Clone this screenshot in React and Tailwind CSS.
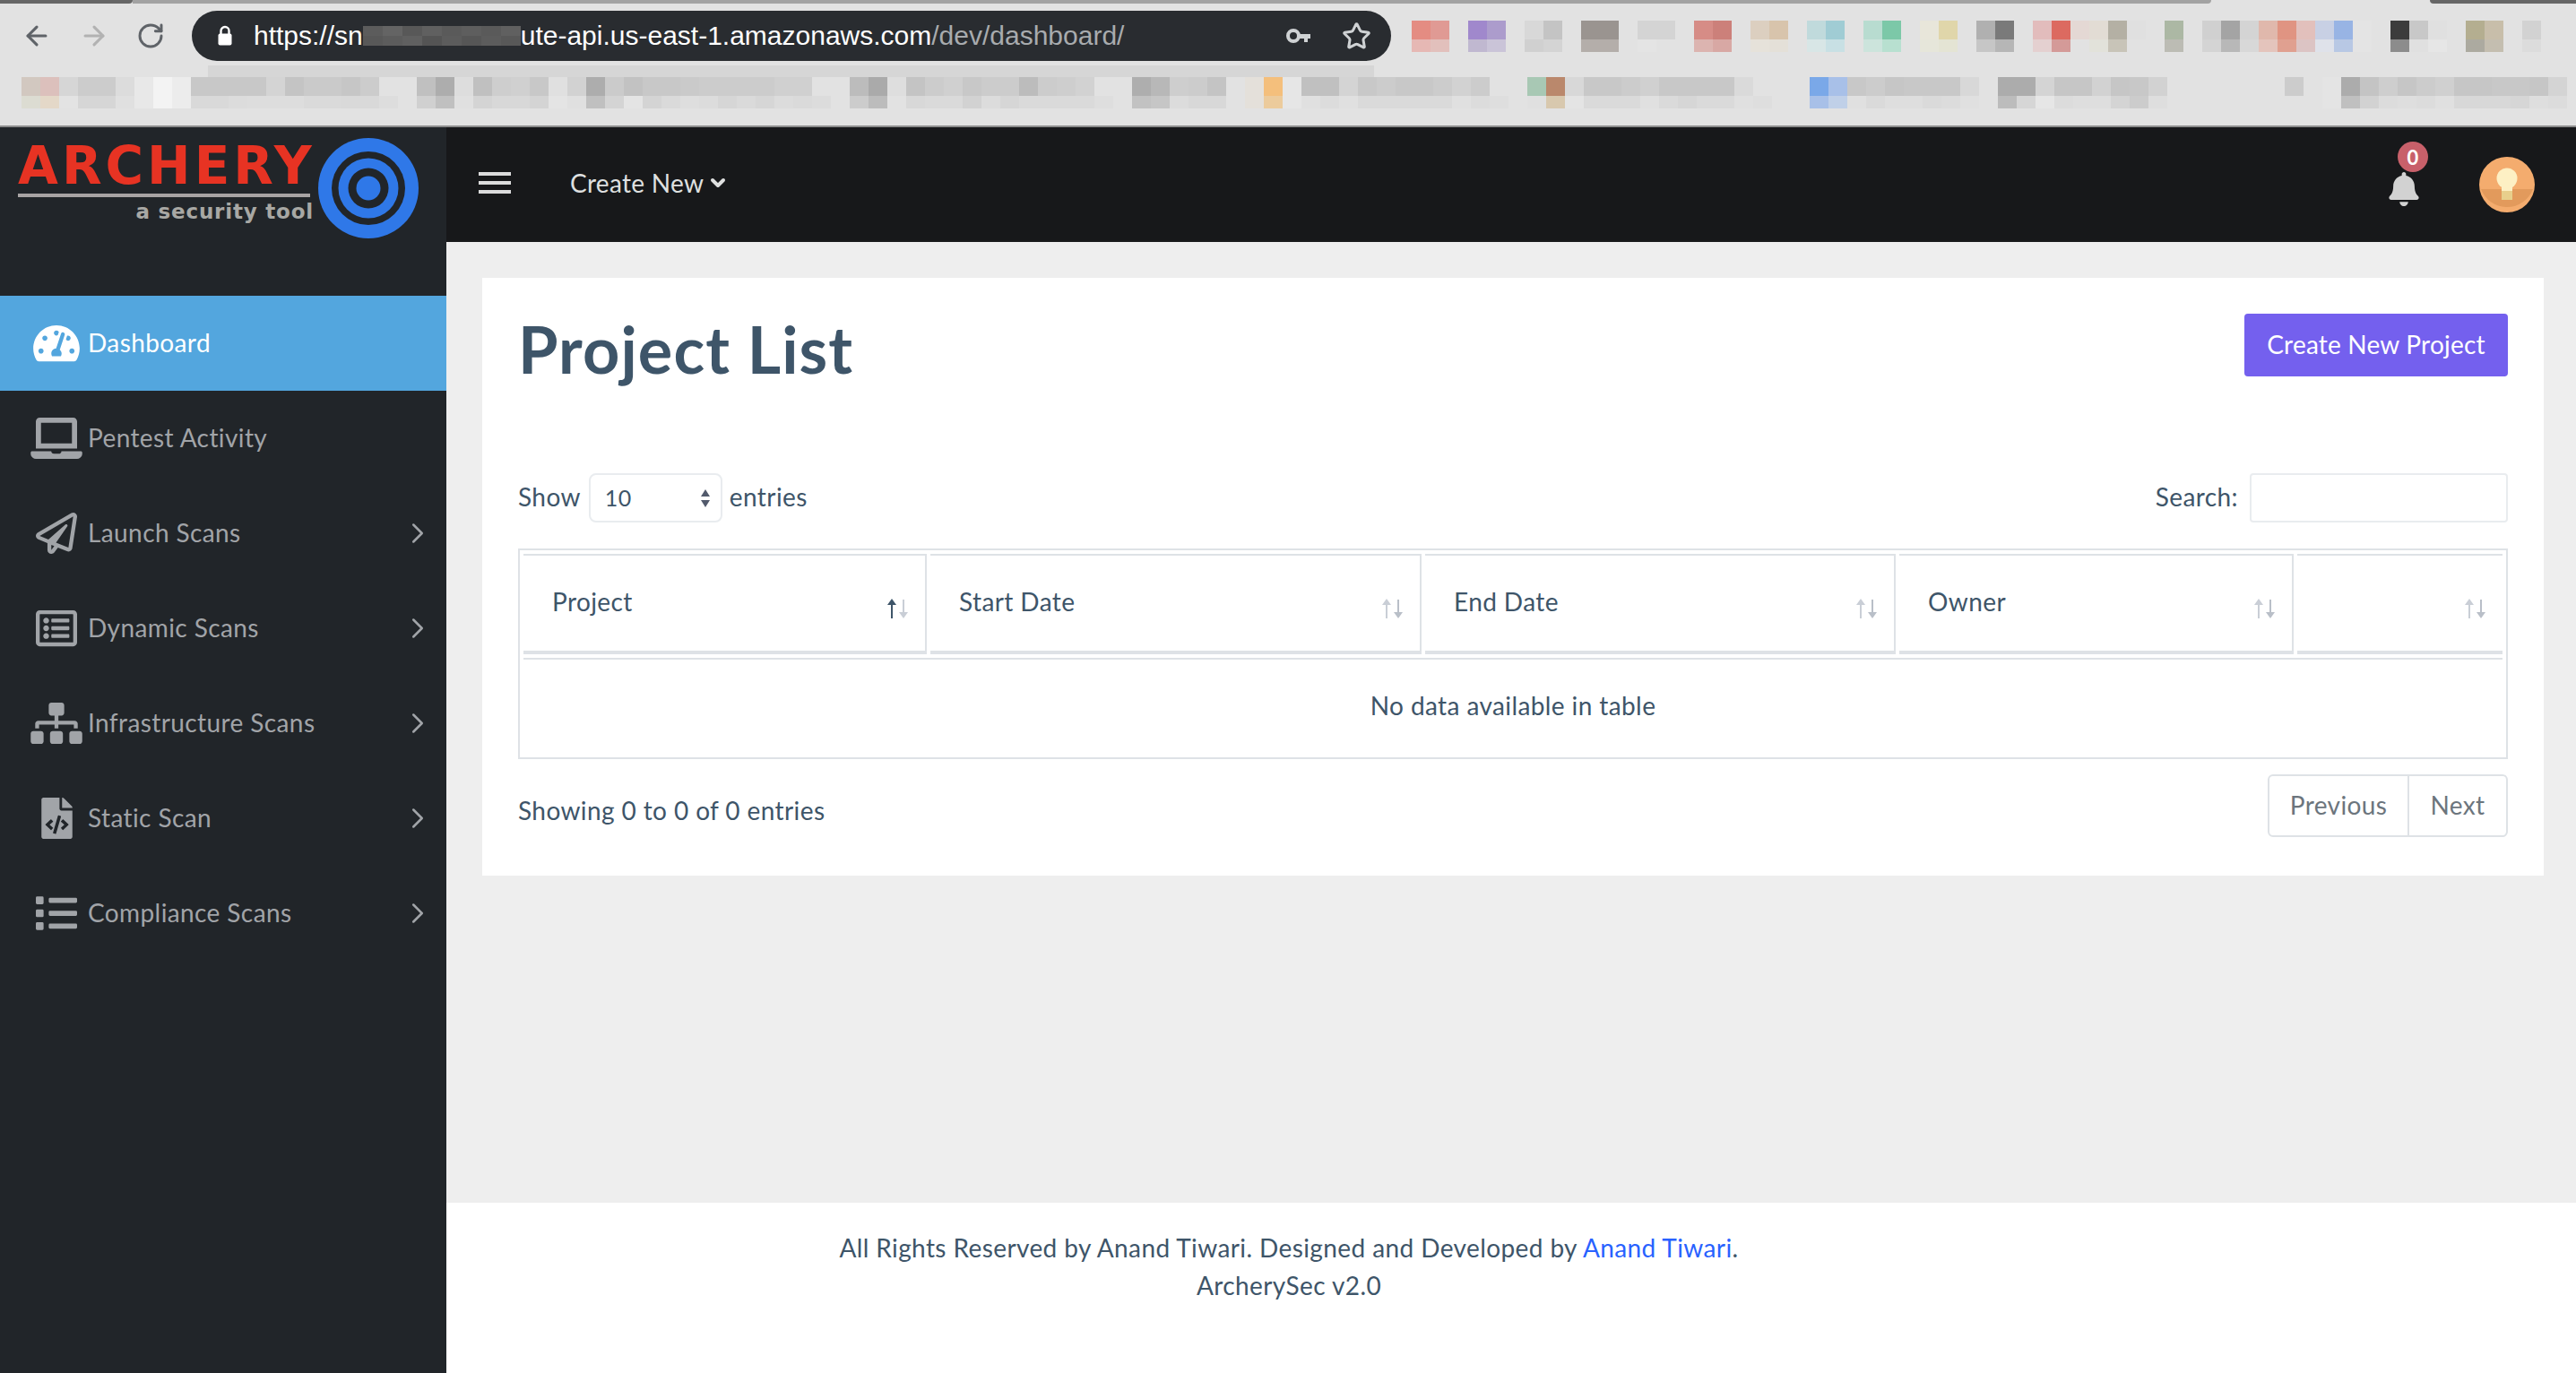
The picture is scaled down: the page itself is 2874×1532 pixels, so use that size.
import { ArrowLeft, ArrowRight, RotateCw, Star, ChevronRight, ChevronDown } from "lucide-react"
import {
  FaTachometerAlt,
  FaLaptop,
  FaRegPaperPlane,
  FaRegListAlt,
  FaSitemap,
  FaFileCode,
  FaList,
  FaBell,
} from "react-icons/fa"

// redacted bookmark bar, "top/bottom" per 21px block. two hex digits = a gray
const row1 = "e48c82/e6b8b4 e09a94/e2c0bc e2/e2 a088cc/c0b8d0 ac9ccc/cac4d8 e2/e2 d8/d0 c4/d4 e2/e2 9a9490/b4aeaa 9a9490/b4aeaa e2/e2 d4/e4 d4/e2 e2/e2 d68c86/dcb4b0 cc807a/d8a8a4 e2/e2 dccfc0/e6e2da d8c4ac/e4e0d8 e2/e2 c0dadc/d8e6e6 a0ccd4/c8e0e4 e2/e2 b8dcd0/cce4dc 7cc8a8/b8e0d0 e2/e2 e8e6da/e6e6da e0d6aa/e4e4d4 e2/e2 b0/c6 7a/b6 e2/e2 e2bcbc/e4d0d0 dc6a60/d49a98 e4d8d4/e2e2e2 e2dcd4/e2e2da b4b0a4/c8c4b8 e0/e2 e2/e2 acb8a4/bcbcb4 e2/e2 d0/d4 a4/b8 d4/d8 e0b8ac/e4c4bc e09482/e0a090 e2c0bc/dcc4c4 c8d0e4/dfe2ea 98b4e4/b8c8e4 e4/e4 e2/e2 3c/8c c8/e0 e0/e6 e2/e2 b4ae90/acaaa0 c8beaa/c4beb0 e2/e2 d2/dc".split(" ")

const row2 = "d2c8c0/dcdcd2 dcc0bc/e4d8c8 d6/e3 cc/d6 cc/d6 dc/e0 e8/e8 f3/f3 ec/ec c8/d9 c8/d9 c8/dc c8/dd d4/dd c4/dd ca/da ca/da c6/d9 cc/d9 e2/dd e2/e2 c0/d0 ad/c0 dd/e0 c0/d4 ce/d8 d0/d8 c8/d4 e0/e4 d2/e0 ad/c0 cb/d4 c2/e4 c8/d4 c8/da ca/de cc/dc cc/d6 cc/da cc/d6 d0/dc d0/da e2/dc e2/e2 bc/cc aa/bc de/e2 c4/d8 cc/da d0/da c8/d2 cc/dc cc/d6 bc/da cc/da ce/da d2/da e2/de e2/e2 ae/c2 b8/c6 ce/dc cc/d8 c4/d8 e2/e2 e4e0da/e4e0da f4bf7c/eccb9c e6/e6 c0/e0 c0/dc d4/e0 c8/da cc/da c8/da c8/da cc/da d2/e0 cc/dc e2/de e2/e2 a8c8b4/e0e0e0 ba886c/d8c8ae d8/e4 c8/da c8/da cc/da d0/e0 c8/da c8/d6 c8/da c8/da da/e0 e2/de e2/e2 e2/e2 7aa8e8/a8c0e8 a8c0e8/c0d0e8 c8/e0 cc/da c6/de c8/de c8/da c8/dc d8/e0 e2/e2 ac/bc ac/d6 d4/e6 c6/dc c6/de d2/de c6/d4 c8/cc d2/de e2/e2 e2/e2 e2/e2 e2/e2 e2/e2 e2/e2".split(" ")

const row2b = "cc/e2 e2/e2 e4/e4 ac/c0 c4/d2 ce/dc c6/de cc/dc d0/e0 c6/d8 c6/d8 c8/d8 c8/d6 c6/de d4/dc".split(" ")

const urlBlur = "5c/58 64/5c 58/60 60/54 5a/5c 5e/56 5a/5c 60/58".split(" ")

function shade(c) {
  return c.length === 2 ? `#${c}${c}${c}` : `#${c}`
}

function Blocks({ cells, w = "w-[21px]", topH = "h-[21px]", botH = "h-[14px]" }) {
  return (
    <div className="flex">
      {cells.map((cell, i) => {
        const [top, bot] = cell.split("/")
        return (
          <div key={i} className={`${w} shrink-0`}>
            <div className={topH} style={{ background: shade(top) }} />
            <div className={botH} style={{ background: shade(bot) }} />
          </div>
        )
      })}
    </div>
  )
}

function BrowserChrome() {
  return (
    <div className="h-[142px] shrink-0 bg-[#e2e2e2] border-b-2 border-[#8c8c8c] font-['Liberation_Sans',sans-serif] tracking-normal">
      <div className="flex h-[4px]">
        <div className="w-[148px] bg-[#666666] rounded-br-md" />
        <div className="w-[2319px] bg-[#a2a2a2] rounded-br-md" />
        <div className="w-[244px]" />
        <div className="flex-1 bg-[#666666] rounded-bl-md" />
      </div>

      <div className="flex mt-[8px] h-[56px]">
        <div className="w-[214px] shrink-0 flex items-center pl-[24px] gap-[30px] text-[#5f6368]">
          <ArrowLeft size={34} strokeWidth={2.2} className="shrink-0" />
          <ArrowRight size={34} strokeWidth={2.2} className="shrink-0 text-[#b2b2b2]" />
          <RotateCw size={32} strokeWidth={2.2} className="shrink-0" />
        </div>

        <div className="w-[1338px] shrink-0 rounded-full bg-[#292c30] flex items-center pl-[28px] pr-[22px]">
          <svg className="shrink-0" width="18" height="24" viewBox="0 0 18 24">
            <path d="M4.5 10V6.5a4.5 4.5 0 0 1 9 0V10" fill="none" stroke="#fff" strokeWidth="2.4" />
            <rect x="1.5" y="9.5" width="15" height="13" rx="2" fill="#fff" />
          </svg>
          <div className="pl-[23px] flex items-center text-[30px] leading-none text-white whitespace-nowrap">
            <span>https://sn</span>
            <Blocks cells={urlBlur} w="w-[22px]" topH="h-[11px]" botH="h-[11px]" />
            <span>ute-api.us-east-1.amazonaws.com</span>
            <span className="text-[#a8abae]">/dev/dashboard/</span>
          </div>
          <div className="ml-auto flex items-center gap-[34px] text-[#cfd2d4]">
            <svg width="28" height="18" viewBox="0 0 28 18">
              <circle cx="8" cy="9" r="6" fill="none" stroke="currentColor" strokeWidth="4" />
              <path d="M14 7h13v5h-3v4h-4v-4h-6z" fill="currentColor" />
            </svg>
            <Star size={33} strokeWidth={2.2} />
          </div>
        </div>

        <div className="ml-[23px] mt-[11px]">
          <Blocks cells={row1} />
        </div>
      </div>

      <div className="ml-[232px] mt-[5px] w-[1301px] h-[13px] bg-[#d6d6d6]" />
      <div className="flex pl-[24px]">
        <Blocks cells={row2} />
        <div className="w-[5px]" />
        <Blocks cells={row2b} />
      </div>
    </div>
  )
}

const menu = [
  { label: "Dashboard", icon: FaTachometerAlt, iconClass: "w-[52px] h-[46px]", active: true },
  { label: "Pentest Activity", icon: FaLaptop, iconClass: "w-[58px] h-[46px]" },
  { label: "Launch Scans", icon: FaRegPaperPlane, iconClass: "w-[46px] h-[46px]", arrow: true },
  { label: "Dynamic Scans", icon: FaRegListAlt, iconClass: "w-[46px] h-[46px]", arrow: true },
  { label: "Infrastructure Scans", icon: FaSitemap, iconClass: "w-[58px] h-[46px]", arrow: true },
  { label: "Static Scan", icon: FaFileCode, iconClass: "w-[35px] h-[46px]", arrow: true },
  { label: "Compliance Scans", icon: FaList, iconClass: "w-[46px] h-[46px]", arrow: true },
]

function Logo() {
  return (
    <div className="h-[188px] flex items-start pt-[12px] pl-[20px] tracking-normal">
      <div className="w-[335px] pt-[6px] font-['DejaVu_Sans',sans-serif]">
        <div className="text-[58px] leading-[50px] font-bold text-[#e73323] tracking-[4px] whitespace-nowrap">ARCHERY</div>
        <div className="h-[4px] w-[326px] mt-[6px] bg-[#a8a4a4]" />
        <div className="text-[23px] leading-[30px] mt-[1px] w-[330px] text-right font-bold text-[#a8a8a4] tracking-[0.8px] whitespace-nowrap">
          a security tool
        </div>
      </div>
      <svg width="112" height="112" viewBox="0 0 112 112" className="shrink-0">
        <circle cx="56" cy="56" r="56" fill="#2f78e8" />
        <circle cx="56" cy="56" r="41" fill="#212529" />
        <circle cx="56" cy="56" r="33.5" fill="#2f78e8" />
        <circle cx="56" cy="56" r="22.5" fill="#212529" />
        <circle cx="56" cy="56" r="13.5" fill="#2f78e8" />
      </svg>
    </div>
  )
}

function Sidebar() {
  return (
    <aside className="w-[498px] shrink-0 bg-[#212529]">
      <Logo />
      {menu.map((item) => {
        const Icon = item.icon
        return (
          <div
            key={item.label}
            className={`h-[106px] flex items-center ${item.active ? "bg-[#53a6de] text-white" : "text-[#a1a4a8]"}`}
          >
            <div className="w-[98px] pl-[34px] pr-[6px] flex justify-center shrink-0">
              <Icon className={`${item.iconClass} shrink-0`} />
            </div>
            <span className="pb-[3px]">{item.label}</span>
            {item.arrow && <ChevronRight size={38} strokeWidth={1.6} className="ml-auto mr-[13px]" />}
          </div>
        )
      })}
    </aside>
  )
}

function TopBar() {
  return (
    <div className="h-[128px] shrink-0 bg-[#17181a] flex items-center pl-[36px] pr-[46px]">
      <div className="w-[36px] flex flex-col gap-[6px] mr-[66px] -mt-[4px]">
        <div className="h-[4px] bg-[#dcdcdc]" />
        <div className="h-[4px] bg-[#dcdcdc]" />
        <div className="h-[4px] bg-[#dcdcdc]" />
      </div>
      <div className="flex items-center text-[#dfe0e0] tracking-[0.3px] -mt-[4px]">
        Create New
        <ChevronDown size={24} strokeWidth={4} className="ml-[4px]" />
      </div>
      <div className="ml-auto flex items-center gap-[65px]">
        <div className="relative mt-[10px]">
          <FaBell size={38} className="text-[#d2d2d2]" />
          <div className="absolute -top-[34px] left-[12px] w-[34px] h-[34px] rounded-full bg-[#c8606a] text-white text-[22px] font-bold flex items-center justify-center">
            0
          </div>
        </div>
        <div className="w-[62px] h-[62px]">
          <svg width="62" height="62" viewBox="0 0 62 62">
            <circle cx="31" cy="31" r="31" fill="#f4ac6e" />
            <path d="M2 36h58a31 31 0 0 1-58 0z" fill="#e29a5c" />
            <rect x="25" y="36" width="12" height="12" fill="#e8cf8c" />
            <circle cx="31" cy="24" r="11.5" fill="#fdf0c4" />
            <rect x="25" y="24" width="12" height="14" fill="#fdf0c4" />
          </svg>
        </div>
      </div>
    </div>
  )
}

function SortIcon({ active }) {
  return (
    <svg width="28" height="26" viewBox="0 0 28 26" className="shrink-0 mt-[12px]">
      <g fill={active ? "#3e5569" : "#c9ced6"} stroke={active ? "#3e5569" : "#c9ced6"}>
        <path d="M8 6v18" strokeWidth="2" />
        <path d="M3 9l5-7 5 7z" strokeWidth="0" />
      </g>
      <g fill={active ? "#c9ced6" : "#b9bfc8"} stroke={active ? "#c9ced6" : "#b9bfc8"}>
        <path d="M21 3v17" strokeWidth="2" />
        <path d="M16 17h10l-5 7z" strokeWidth="0" />
      </g>
    </svg>
  )
}

const columns = [
  { label: "Project", active: true },
  { label: "Start Date" },
  { label: "End Date" },
  { label: "Owner" },
  { label: "" },
]

function ProjectTable() {
  return (
    <table className="w-full table-fixed border-separate border-spacing-[4px] border-2 border-[#dee2e6] mt-[29px]">
      <colgroup>
        <col className="w-[450px]" />
        <col className="w-[548px]" />
        <col className="w-[525px]" />
        <col className="w-[440px]" />
        <col className="w-[229px]" />
      </colgroup>
      <thead>
        <tr>
          {columns.map((col, i) => (
            <th
              key={i}
              className={`h-[112px] p-0 pl-[32px] pr-[17px] font-normal text-left border-t-2 border-b-4 border-[#dee2e6] ${
                i < 4 ? "border-r-2" : ""
              }`}
            >
              <div className="flex justify-between items-center">
                <span className="pb-[4px]">{col.label}</span>
                <SortIcon active={col.active} />
              </div>
            </th>
          ))}
        </tr>
      </thead>
      <tbody>
        <tr>
          <td colSpan={5} className="h-[107px] p-0 pb-[3px] text-center border-t-2 border-[#dee2e6]">
            No data available in table
          </td>
        </tr>
      </tbody>
    </table>
  )
}

function ProjectCard() {
  return (
    <section className="bg-white h-[667px] px-[40px] pt-[40px] text-[#3e5569]">
      <div className="flex items-start justify-between h-[178px]">
        <h1 className="text-[72px] leading-[78px] font-bold tracking-[1.1px]">Project List</h1>
        <button className="w-[294px] h-[70px] pb-[3px] rounded-[4px] bg-[#7460ee] text-white tracking-[0.2px]">
          Create New Project
        </button>
      </div>

      <div className="flex items-center justify-between h-[55px]">
        <div className="flex items-center">
          <span className="pb-[3px]">Show</span>
          <div className="ml-[9px] w-[149px] h-[55px] border-2 border-[#e9ecef] rounded-[8px] flex items-center justify-between pl-[16px] pr-[11px] text-[25px]">
            10
            <svg width="12" height="24" viewBox="0 0 12 24">
              <path d="M6 2l5 8H1zM6 22l5-8H1z" fill="#525a6c" />
            </svg>
          </div>
          <span className="ml-[8px] pb-[3px]">entries</span>
        </div>
        <div className="flex items-center">
          <span className="pb-[3px]">Search:</span>
          <div className="ml-[13px] w-[288px] h-[55px] border-2 border-[#e9ecef] rounded-[4px]" />
        </div>
      </div>

      <ProjectTable />

      <div className="flex justify-between mt-[17px]">
        <span className="mt-[19px]">Showing 0 to 0 of 0 entries</span>
        <div className="flex h-[70px] border-2 border-[#dee2e6] rounded-[6px] text-[#6c757d]">
          <div className="w-[156px] pb-[3px] flex items-center justify-center border-r-2 border-[#dee2e6]">Previous</div>
          <div className="w-[108px] pb-[3px] flex items-center justify-center">Next</div>
        </div>
      </div>
    </section>
  )
}

export default function App() {
  return (
    <div className="h-[1532px] overflow-hidden flex flex-col font-[Lato,sans-serif] text-[28px] tracking-[0.4px]">
      <BrowserChrome />
      <div className="flex flex-1 min-h-0">
        <Sidebar />
        <main className="flex-1 flex flex-col bg-[#eeeeee]">
          <TopBar />
          <div className="flex-1 p-[40px] pr-[36px]">
            <ProjectCard />
          </div>
          <footer className="h-[190px] shrink-0 bg-white pt-[29px] pr-[496px] text-center text-[#3e5569] leading-[42px]">
            All Rights Reserved by Anand Tiwari. Designed and Developed by{" "}
            <span className="text-[#2962ff]">Anand Tiwari</span>.
            <br />
            ArcherySec v2.0
          </footer>
        </main>
      </div>
    </div>
  )
}
